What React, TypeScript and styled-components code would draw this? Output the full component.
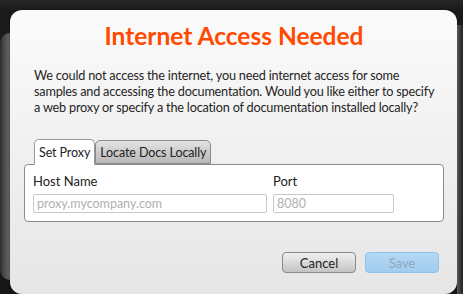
import React from "react";
import styled, { createGlobalStyle } from "styled-components";

const Global = createGlobalStyle`
  html, body { margin: 0; padding: 0; background: #1d1d1d; overflow: hidden; }
  body { font-family: Lato, "Noto Sans", sans-serif; }
`;

const Desktop = styled.div`
  width: 463px;
  height: 294px;
  display: grid;
  grid-template-columns: 10px 447px 6px;
  grid-template-rows: 10px 284px;
  background: linear-gradient(#262626, #1b1b1b 10px, #161616);
  overflow: hidden;
`;

const SidePanel = styled.div<{ $side: "left" | "right" }>`
  grid-row: 1 / span 2;
  margin-top: ${(p) => (p.$side === "left" ? "33px" : "25px")};
  margin-bottom: ${(p) => (p.$side === "left" ? "14px" : "0")};
  border-radius: ${(p) => (p.$side === "left" ? "10px 0 0 10px" : "0")};
  background: ${(p) =>
    p.$side === "left"
      ? "linear-gradient(to right, #2c2c2c, #4a4a4a 40%, #676767)"
      : "linear-gradient(to right, #5a5a5a, #3a3a3a 50%, #232323)"};
`;

const Dialog = styled.div`
  grid-row: 2;
  grid-column: 2;
  border-radius: 12px;
  background: linear-gradient(#fbfbfb, #f0f0f0 50%, #e6e6e6);
  box-shadow: 0 0 2px rgba(0, 0, 0, 0.6);
  display: flex;
  flex-direction: column;
  padding: 12px 13px 0 14px;
  box-sizing: border-box;
`;

const Title = styled.h1`
  margin: 0;
  text-align: center;
  color: #ff4a00;
  font-size: 24.5px;
  font-weight: 700;
  line-height: 28px;
`;

const Message = styled.p`
  margin: 17px 0 0 10px;
  font-size: 12.7px;
  letter-spacing: -0.2px;
  line-height: 16px;
  color: #252525;
  white-space: nowrap;
`;

const TabStrip = styled.div`
  display: flex;
  margin: 24px 0 0 10px;
  position: relative;
  z-index: 1;
`;

const Tab = styled.div<{ $active?: boolean }>`
  height: ${(p) => (p.$active ? "26px" : "24px")};
  margin-top: ${(p) => (p.$active ? "0" : "1px")};
  box-sizing: border-box;
  padding: 0 4px;
  display: flex;
  align-items: center;
  font-size: 12.5px;
  letter-spacing: -0.1px;
  color: #222;
  white-space: nowrap;
  border: 1px solid ${(p) => (p.$active ? "#9a9a9a" : "#8a8a8a")};
  border-bottom: ${(p) => (p.$active ? "none" : "1px solid #8a8a8a")};
  border-radius: 5px 5px 0 0;
  background: ${(p) =>
    p.$active ? "#ffffff" : "linear-gradient(#e4e4e4, #c8c8c8 60%, #b8b8b8)"};
`;

const TabBody = styled.div`
  margin-top: -1px;
  background: #fff;
  border: 1px solid #8c8c8c;
  border-radius: 4px;
  height: 58px;
  box-sizing: border-box;
  display: grid;
  grid-template-columns: 234px 121px;
  column-gap: 6px;
  padding: 8px 0 0 8px;
`;

const Field = styled.div`
  display: flex;
  flex-direction: column;
  gap: 4px;
`;

const Label = styled.label`
  font-size: 13px;
  color: #222;
  line-height: 17px;
`;

const Input = styled.input`
  height: 19px;
  box-sizing: border-box;
  border: 1px solid #c8c8c8;
  border-radius: 2px;
  padding: 0 3px;
  font-family: inherit;
  font-size: 12.5px;
  color: #333;
  background: #fff;
  outline: none;
  &::placeholder { color: #b0b0b0; }
`;

const Actions = styled.div`
  display: flex;
  justify-content: flex-end;
  gap: 9px;
  margin-top: 30px;
  padding-right: 5px;
`;

const Button = styled.button<{ $primary?: boolean }>`
  width: 74px;
  height: 21px;
  box-sizing: border-box;
  border-radius: 4px;
  font-family: inherit;
  font-size: 13px;
  padding: 0;
  border: 1px solid ${(p) => (p.$primary ? "#8fc1e8" : "#8a8a8a")};
  background: ${(p) =>
    p.$primary
      ? "linear-gradient(#b4d8f4, #a2ccee)"
      : "linear-gradient(#f0f0f0, #d6d6d6 60%, #c4c4c4)"};
  color: ${(p) => (p.$primary ? "#8aa9c2" : "#222")};
`;

export default function App() {
  return (
    <>
      <Global />
      <Desktop>
        <SidePanel $side="left" />
        <Dialog>
          <Title>Internet Access Needed</Title>
          <Message>
            We could not access the internet, you need internet access for some
            <br />
            samples and accessing the documentation. Would you like either to specify
            <br />
            a web proxy or specify a the location of documentation installed locally?
          </Message>
          <TabStrip>
            <Tab $active>Set Proxy</Tab>
            <Tab>Locate Docs Locally</Tab>
          </TabStrip>
          <TabBody>
            <Field>
              <Label>Host Name</Label>
              <Input placeholder="proxy.mycompany.com" />
            </Field>
            <Field>
              <Label>Port</Label>
              <Input placeholder="8080" />
            </Field>
          </TabBody>
          <Actions>
            <Button>Cancel</Button>
            <Button $primary disabled>Save</Button>
          </Actions>
        </Dialog>
        <SidePanel $side="right" />
      </Desktop>
    </>
  );
}
